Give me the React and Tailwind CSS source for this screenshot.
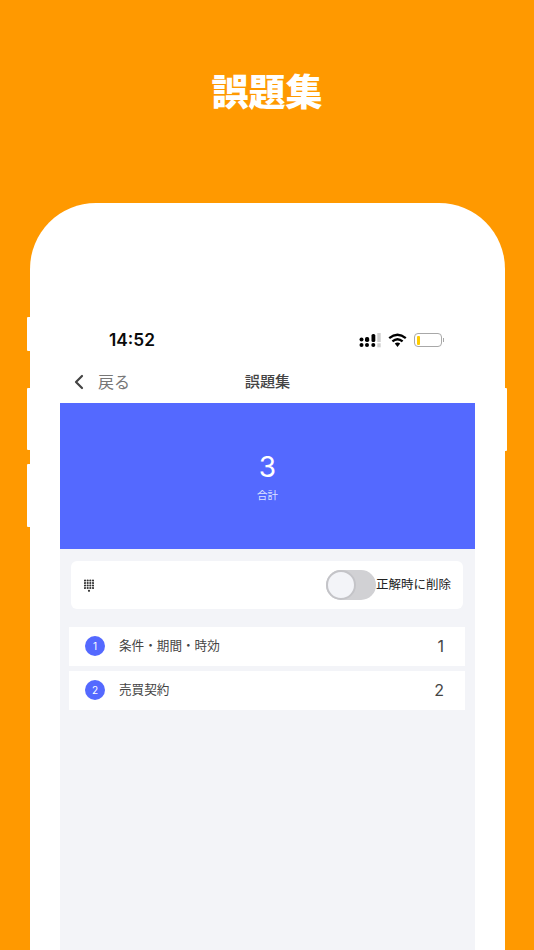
import { ChevronLeft } from "lucide-react";

const font = { cjk: "font-['Inter','Noto_Sans_CJK_JP',sans-serif]" };

const rows = [
  { id: 1, name: "条件・期間・時効", count: 1 },
  { id: 2, name: "売買契約", count: 2 },
];

function SignalIcon() {
  return (
    <svg width="22" height="15" viewBox="0 0 22 15">
      <g fill="#000">
        <circle cx="2.5" cy="6.5" r="2" />
        <circle cx="2.5" cy="12" r="2" />
        <rect x="6" y="4" width="4.2" height="5" rx="1.8" />
        <circle cx="8" cy="12" r="2" />
        <rect x="12.5" y="1" width="3.8" height="8" rx="1.6" />
        <circle cx="14.3" cy="12" r="2" />
      </g>
      <rect x="18.3" y="0" width="3.4" height="9" fill="#cfcfcf" />
      <rect x="18.3" y="10.3" width="3.4" height="4" fill="#cfcfcf" />
    </svg>
  );
}

function WifiIcon() {
  return (
    <svg width="19" height="15" viewBox="0 0 19 15">
      <path d="M1.2 5.2 Q9.5 -1.6 17.8 5.2" fill="none" stroke="#000" strokeWidth="2.3" />
      <path d="M4.4 8.4 Q9.5 4 14.6 8.4" fill="none" stroke="#000" strokeWidth="2.3" />
      <path d="M6.8 10.6 Q9.5 8.4 12.2 10.6 L9.5 14 Z" fill="#000" />
    </svg>
  );
}

function BatteryIcon() {
  return (
    <div className="flex items-center">
      <div className="flex h-[14px] w-[28px] items-center rounded-[4px] border border-[#a8a8a8] px-[2px]">
        <div className="h-[9px] w-[3px] rounded-[1px] bg-[#ffcc00]" />
      </div>
      <div className="ml-[1px] h-[4px] w-[1px] bg-[#a8a8a8]" />
    </div>
  );
}

function GridIcon() {
  return (
    <svg width="10" height="13" viewBox="0 0 10 13" fill="#333">
      {[1, 3.7, 6.3, 9].map((x) =>
        [1.5, 4, 6.5, 9].map((y) => <circle key={`${x}-${y}`} cx={x} cy={y} r="1.1" />)
      )}
      <circle cx="5" cy="11.8" r="1.1" />
    </svg>
  );
}

export default function App() {
  return (
    <div className={`h-[950px] w-[534px] overflow-hidden bg-[#ff9900] ${font.cjk}`}>
      <h1 className="flex h-[203px] justify-center pt-[64px] text-[37px] font-black leading-[58px] text-white">
        誤題集
      </h1>

      <div className="relative mx-[30px] h-[747px] w-[475px] rounded-t-[66px] bg-white">
        {/* side buttons */}
        <div className="absolute left-[-3px] top-[114px] h-[34px] w-[3px] rounded-l-[1px] bg-white" />
        <div className="absolute left-[-3px] top-[185px] h-[62px] w-[3px] rounded-l-[1px] bg-white" />
        <div className="absolute left-[-3px] top-[261px] h-[63px] w-[3px] rounded-l-[1px] bg-white" />
        <div className="absolute right-[-2px] top-[185px] h-[63px] w-[2px] rounded-r-[1px] bg-white" />

        <div className="px-[30px] pt-[124px]">
          <div className="flex h-[26px] items-center justify-between pl-[49px] pr-[31px]">
            <span className="text-[17.3px] font-semibold leading-[26px] text-[#0a0a0a]">14:52</span>
            <div className="flex items-center gap-[7px]">
              <SignalIcon />
              <WifiIcon />
              <BatteryIcon />
            </div>
          </div>

          <div className="relative flex h-[50px] items-center pl-[7px] pt-[8px]">
            <ChevronLeft size={24} strokeWidth={2.2} className="text-[#444]" />
            <span className="ml-[7px] text-[16px] text-[#777]">戻る</span>
            <span className="absolute inset-x-0 text-center text-[15.2px] font-medium text-[#444]">誤題集</span>
          </div>

          <div className="flex h-[146px] flex-col items-center bg-[#5469ff] pt-[46px] text-white">
            <span className="text-[28px] leading-[36px]">3</span>
            <span className="mt-[3px] text-[10.5px] leading-[16px] text-[#dfe3ff]">合計</span>
          </div>

          <div className="h-[401px] bg-[#f3f4f8] pl-[9px] pr-[10px] pt-[12px]">
            <div className="mx-[2px] flex h-[48px] items-center justify-between rounded-[6px] bg-white pl-[13px] pr-[12px]">
              <GridIcon />
              <div className="flex items-center">
                <div className="flex h-[30px] w-[50px] items-center rounded-full bg-[#d1d1d4]">
                  <div className="h-[30px] w-[30px] rounded-full border-2 border-[#c4c4c8] bg-[#f3f4f8]" />
                </div>
                <span className="text-[12.5px] text-[#222]">正解時に削除</span>
              </div>
            </div>

            <div className="mt-[18px] flex flex-col gap-[5px]">
              {rows.map((row) => (
                <div key={row.id} className="flex h-[39px] items-center bg-white pb-[1px] pl-[16px] pr-[21px]">
                  <div className="flex h-[20px] w-[20px] items-center justify-center rounded-full bg-[#5469ff] text-[10px] text-white">
                    {row.id}
                  </div>
                  <span className="ml-[14px] flex-1 text-[12.6px] text-[#444]">{row.name}</span>
                  <span className="text-[16px] text-[#444]">{row.count}</span>
                </div>
              ))}
            </div>
          </div>
        </div>
      </div>
    </div>
  );
}
